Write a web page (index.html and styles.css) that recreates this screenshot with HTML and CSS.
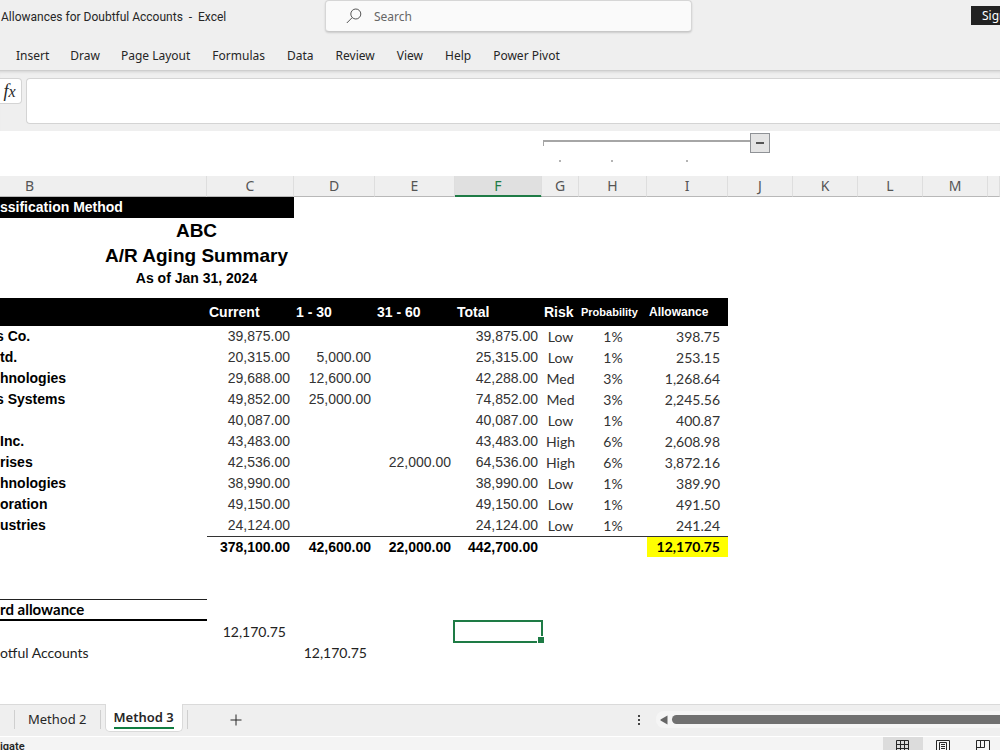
FILE: index.html
```html
<!DOCTYPE html>
<html lang="en">
<head>
<meta charset="UTF-8">
<meta name="viewport" content="width=device-width, initial-scale=1.0">
<title>Allowances for Doubtful Accounts - Excel</title>
<link rel="stylesheet" href="styles.css">
</head>
<body>
<header class="title-bar">
    <div class="doc-title">Allowances for Doubtful Accounts&nbsp; -&nbsp; Excel</div>
    <label class="search">
        <svg class="search-icon" viewBox="0 0 16 16" aria-hidden="true">
            <circle cx="9.8" cy="6" r="5"/>
            <path d="M6.2 9.6L0.8 15"/>
        </svg>
        <input type="search" placeholder="Search" aria-label="Search">
    </label>
    <button class="sign-in">Sign in</button>
</header>

<nav class="ribbon">
    <button>Insert</button>
    <button>Draw</button>
    <button>Page Layout</button>
    <button>Formulas</button>
    <button>Data</button>
    <button>Review</button>
    <button>View</button>
    <button>Help</button>
    <button>Power Pivot</button>
</nav>

<div class="formula-bar">
    <button class="fx" aria-label="Insert function"><i>f<span>x</span></i></button>
    <input class="formula" type="text" aria-label="Formula bar">
</div>

<div class="outline">
    <div class="group">
        <span class="bracket"></span>
        <button class="collapse" aria-label="Collapse group"></button>
    </div>
    <span class="dot dot-g"></span>
    <span class="dot"></span>
    <span class="dot"></span>
</div>

<main class="sheet">
    <table>
        <colgroup>
            <col class="w-b"><col class="w-c"><col class="w-d"><col class="w-e"><col class="w-f"><col class="w-g"><col class="w-h"><col class="w-i">
            <col class="w-std"><col class="w-std"><col class="w-std"><col class="w-std"><col>
        </colgroup>
        <thead>
            <tr class="letters">
                <th class="letter-b">B</th><th>C</th><th>D</th><th>E</th><th class="active">F</th><th>G</th><th>H</th><th>I</th><th>J</th><th>K</th><th>L</th><th>M</th><th></th>
            </tr>
        </thead>
        <tbody>
            <tr><td class="band" colspan="2">ssification Method</td></tr>
            <tr class="tall"><td class="heading" colspan="2">ABC</td></tr>
            <tr class="tall"><td class="heading" colspan="2">A/R Aging Summary</td></tr>
            <tr><td class="heading small" colspan="2">As of Jan 31, 2024</td></tr>
            <tr class="spacer"><td></td></tr>
            <tr class="fields">
                <th></th><th>Current</th><th>1 - 30</th><th>31 - 60</th><th>Total</th><th>Risk</th><th class="fine">Probability</th><th class="mid">Allowance</th>
            </tr>
            <tr><td class="name cut">s Co.</td><td>39,875.00</td><td></td><td></td><td>39,875.00</td><td class="risk">Low</td><td class="risk">1%</td><td class="amount">398.75</td></tr>
            <tr><td class="name">td.</td><td>20,315.00</td><td>5,000.00</td><td></td><td>25,315.00</td><td class="risk">Low</td><td class="risk">1%</td><td class="amount">253.15</td></tr>
            <tr><td class="name">hnologies</td><td>29,688.00</td><td>12,600.00</td><td></td><td>42,288.00</td><td class="risk">Med</td><td class="risk">3%</td><td class="amount">1,268.64</td></tr>
            <tr><td class="name cut">s Systems</td><td>49,852.00</td><td>25,000.00</td><td></td><td>74,852.00</td><td class="risk">Med</td><td class="risk">3%</td><td class="amount">2,245.56</td></tr>
            <tr><td></td><td>40,087.00</td><td></td><td></td><td>40,087.00</td><td class="risk">Low</td><td class="risk">1%</td><td class="amount">400.87</td></tr>
            <tr><td class="name">Inc.</td><td>43,483.00</td><td></td><td></td><td>43,483.00</td><td class="risk">High</td><td class="risk">6%</td><td class="amount">2,608.98</td></tr>
            <tr><td class="name">rises</td><td>42,536.00</td><td></td><td>22,000.00</td><td>64,536.00</td><td class="risk">High</td><td class="risk">6%</td><td class="amount">3,872.16</td></tr>
            <tr><td class="name">hnologies</td><td>38,990.00</td><td></td><td></td><td>38,990.00</td><td class="risk">Low</td><td class="risk">1%</td><td class="amount">389.90</td></tr>
            <tr><td class="name">oration</td><td>49,150.00</td><td></td><td></td><td>49,150.00</td><td class="risk">Low</td><td class="risk">1%</td><td class="amount">491.50</td></tr>
            <tr><td class="name">ustries</td><td>24,124.00</td><td></td><td></td><td>24,124.00</td><td class="risk">Low</td><td class="risk">1%</td><td class="amount">241.24</td></tr>
            <tr class="totals"><td></td><td>378,100.00</td><td>42,600.00</td><td>22,000.00</td><td>442,700.00</td><td></td><td></td><td class="amount highlight">12,170.75</td></tr>
            <tr><td></td></tr>
            <tr><td></td></tr>
            <tr><td class="entry-title">rd allowance</td></tr>
            <tr><td></td><td class="entry">12,170.75</td><td></td><td></td><td class="selected"><span class="cursor"></span></td></tr>
            <tr><td class="entry-name">otful Accounts</td><td></td><td class="entry">12,170.75</td></tr>
        </tbody>
    </table>
</main>

<div class="tab-bar">
    <div class="tabs">
        <button class="tab">Method 2</button>
        <button class="tab current"><span>Method 3</span></button>
        <button class="add" aria-label="New sheet">
            <svg viewBox="0 0 12 12" aria-hidden="true"><path d="M6 0.5V11.5M0.5 6H11.5"/></svg>
        </button>
    </div>
    <div class="scroll-area">
        <svg class="grip" viewBox="0 0 4 12" aria-hidden="true">
            <path d="M1 1h2v2h-2zM1 5h2v2h-2zM1 9h2v2h-2z"/>
        </svg>
        <div class="scrollbar">
            <svg class="arrow" viewBox="0 0 8 10" aria-hidden="true"><path d="M7.5 0.5V9.5L0.5 5.5V4.5Z"/></svg>
            <div class="thumb"></div>
        </div>
    </div>
</div>

<footer class="status-bar">
    <span class="status-text">igate</span>
    <div class="views">
        <button class="on" aria-label="Normal view">
            <svg viewBox="0 0 14 14"><path d="M.5 .5h12v12H.5zM4.5 .5v12M8.5 .5v12M.5 4.5h12M.5 8.5h12"/></svg>
        </button>
        <button aria-label="Page layout view">
            <svg viewBox="0 0 14 14"><path d="M.5 .5h13v13H.5zM3.5 2.5h7v9h-7zM5 4.5h4M5 6.5h4M5 8.5h4"/></svg>
        </button>
        <button aria-label="Page break preview">
            <svg viewBox="0 0 14 14"><path d="M.5 .5h13v13H.5zM.5 7.5h8M4.5 .5v7M8.5 .5v7"/></svg>
        </button>
    </div>
</footer>
</body>
</html>
```

FILE: styles.css
```css
* { margin: 0; padding: 0; box-sizing: border-box; }
body {
    height: 100vh;
    display: flex;
    flex-direction: column;
    overflow: hidden;
    background: #fff;
    color: #262626;
    font-family: "Noto Sans", "Open Sans", sans-serif;
    font-size: 12px;
}
button, input {
    font: inherit;
    color: inherit;
    border: none;
    background: none;
    outline: none;
}
button { white-space: nowrap; }
svg { display: block; fill: none; stroke: #262626; }

/* title bar */
.title-bar {
    display: flex;
    align-items: flex-start;
    flex: none;
    height: 40px;
    background: #efefef;
    overflow: hidden;
}
.doc-title {
    width: 325px;
    padding: 8px 0 0 1px;
    font-family: Roboto, "Noto Sans", sans-serif;
    line-height: 18px;
    white-space: nowrap;
}
.search {
    display: flex;
    align-items: center;
    width: 367px;
    height: 32px;
    padding-left: 20px;
    gap: 12px;
    background: #fafafa;
    border: 1px solid #d6d6d6;
    border-bottom-color: #c8c8c8;
    border-radius: 4px;
    box-shadow: 0 1px 2px rgba(0, 0, 0, 0.15);
}
.search-icon { width: 16px; height: 16px; stroke: #555; }
.search input { flex: 1; color: #666; }
.search input::placeholder { color: #666; opacity: 1; }
.sign-in {
    width: 60px;
    height: 19px;
    margin: 6px -31px 0 auto;
    padding-left: 11px;
    text-align: left;
    background: #222;
    color: #fff;
    line-height: 19px;
}

/* ribbon */
.ribbon {
    display: flex;
    flex: none;
    gap: 21px;
    height: 31px;
    padding-left: 16px;
    background: #efefef;
    border-bottom: 1px solid #cecece;
}
.ribbon button:nth-child(n+3) { margin-right: 1px; }

/* formula bar */
.formula-bar {
    display: flex;
    flex: none;
    gap: 4px;
    height: 60px;
    padding-top: 7px;
    background: #efefef;
    box-shadow: inset 0 3px 3px -2px rgba(0, 0, 0, 0.12);
}
.fx {
    width: 22px;
    height: 26px;
    padding-right: 2px;
    background: #fff;
    border: 1px solid #d4d4d4;
    border-left: none;
    border-radius: 0 4px 4px 0;
    font-family: "Liberation Serif", serif;
    font-size: 18px;
    line-height: 22px;
}
.fx span { font-size: 16px; }
.formula {
    flex: 1;
    height: 46px;
    background: #fff;
    border: 1px solid #d4d4d4;
    border-right: none;
    border-radius: 4px 0 0 4px;
}

/* column group outline */
.outline {
    display: grid;
    flex: none;
    grid-template-columns: 206px 87px 81px 80px 87px 37px 68px 82px 65px;
    grid-template-rows: 27px 4px;
    height: 45px;
    padding-top: 2px;
}
.group {
    grid-column: 6 / 10;
    display: flex;
    padding: 0 23px 0 2px;
}
.bracket {
    flex: 1;
    height: 6px;
    margin-top: 7px;
    border-top: 2px solid #a6a6a6;
    border-left: 1px solid #a6a6a6;
}
.collapse {
    display: flex;
    align-items: center;
    justify-content: center;
    width: 20px;
    height: 20px;
    background: #e4e4e4;
    border: 1px solid #8f9296;
}
.collapse::before {
    content: "";
    width: 8px;
    height: 2px;
    background: #555;
}
.dot {
    width: 2px;
    height: 2px;
    background: #b4b4b4;
    justify-self: center;
}
.dot-g { grid-column: 6; }

/* worksheet */
.sheet { flex: 1; min-height: 0; overflow: hidden; }
table {
    width: 100%;
    table-layout: fixed;
    border-collapse: separate;
    border-spacing: 0;
    font-family: "Liberation Sans", Arial, sans-serif;
    font-size: 14px;
}
.w-b { width: 207px; }
.w-c, .w-f { width: 87px; }
.w-d { width: 81px; }
.w-e { width: 80px; }
.w-g { width: 37px; }
.w-h { width: 68px; }
.w-i { width: 81px; }
.w-std { width: 65px; }
tr { height: 21px; }
td {
    height: 21px;
    padding-right: 4px;
    line-height: 21px;
    text-align: right;
    white-space: nowrap;
    color: #333;
}
.letters th {
    height: 21px;
    background: #efefef;
    border-right: 1px solid #dedede;
    border-bottom: 1px solid #b8b8b8;
    color: #555;
    font-family: "Noto Sans", "Open Sans", sans-serif;
    font-size: 14px;
    font-weight: normal;
    line-height: 20px;
}
.letters .letter-b { padding-left: 25px; text-align: left; }
.letters .active {
    background: #e0e0e0;
    border-bottom-color: #1e7b45;
    box-shadow: inset 0 -1px #1e7b45;
    color: #1e7b45;
}
.band {
    background: #000;
    color: #fff;
    font-weight: bold;
    text-align: left;
}
.tall, .tall td { height: 25px; }
.heading {
    padding: 0 0 0 99px;
    color: #000;
    font-size: 19px;
    font-weight: bold;
    line-height: 25px;
    text-align: center;
}
.small { font-size: 14px; line-height: 21px; }
.spacer, .spacer td { height: 9px; line-height: 9px; }
.fields th {
    height: 28px;
    padding-left: 2px;
    background: #000;
    color: #fff;
    text-align: left;
    white-space: nowrap;
}
.fields .fine { font-size: 11px; }
.fields .mid { font-size: 12px; }
.name {
    color: #000;
    font-weight: bold;
    text-align: left;
}
.cut { text-indent: -4px; }
.risk, .amount, .entry, .entry-name, .entry-title {
    font-family: Lato, Carlito, Calibri, sans-serif;
}
.risk { padding: 0; text-align: center; }
.amount { padding: 0 8px 0 0; }
.totals td {
    border-top: 1px solid #333;
    color: #000;
    font-weight: bold;
    line-height: 20px;
}
.totals td:first-child { border-top: none; }
.totals .highlight { background: #ff0; }
.entry { padding-right: 8px; color: #222; }
.entry-name { color: #222; text-align: left; }
.entry-title {
    height: 22px;
    border-top: 1px solid #222;
    border-bottom: 2px solid #000;
    color: #000;
    font-size: 15px;
    font-weight: bold;
    line-height: 19px;
    text-align: left;
}
.selected { position: relative; }
.cursor {
    position: absolute;
    inset: -1px -1px -1px -2px;
    border: 2px solid #1e7b45;
}
.cursor::after {
    content: "";
    position: absolute;
    right: -4px;
    bottom: -3px;
    width: 6px;
    height: 6px;
    background: #1e7b45;
    border: 1px solid #fff;
}

/* sheet tabs */
.tab-bar {
    display: flex;
    flex: none;
    height: 32px;
    background: #efefef;
    border-top: 1px solid #dadada;
}
.tabs { display: flex; flex: 1; padding-left: 14px; }
.tab {
    height: 19px;
    margin-top: 5px;
    padding: 0 13px;
    border-left: 1px solid #cfcfcf;
    border-right: 1px solid #cfcfcf;
    font-size: 13px;
    line-height: 19px;
}
.current {
    height: 28px;
    margin: -1px 4px 0;
    padding: 0 8px;
    background: #fff;
    border: 1px solid #dadada;
    border-top: none;
    border-radius: 0 0 5px 5px;
    font-weight: 600;
}
.current span {
    display: block;
    border-bottom: 2px solid #107c41;
    line-height: 20px;
}
.add {
    height: 19px;
    margin-top: 5px;
    padding-left: 42px;
    border-left: 1px solid #cfcfcf;
}
.add svg { width: 12px; height: 12px; }
.scroll-area {
    display: flex;
    align-items: center;
    width: 363px;
    height: 29px;
    gap: 15px;
}
.grip { width: 4px; height: 12px; fill: #444; stroke: none; }
.scrollbar {
    display: flex;
    align-items: center;
    flex: 1;
    height: 17px;
    gap: 4px;
    padding-left: 4px;
    background: #f5f5f5;
    border-radius: 8px 0 0 8px;
}
.arrow { width: 8px; height: 10px; fill: #666; stroke: none; }
.thumb {
    flex: 1;
    height: 9px;
    background: #707070;
    border-radius: 5px 0 0 5px;
}

/* status bar */
.status-bar {
    display: flex;
    flex: none;
    justify-content: space-between;
    height: 14px;
    background: #f4f4f4;
    border-top: 1px solid #fff;
    overflow: hidden;
}
.status-text {
    font-family: Roboto, "Noto Sans", sans-serif;
    font-size: 11px;
    font-weight: 600;
    line-height: 20px;
}
.views { display: flex; width: 117px; }
.views button {
    display: flex;
    justify-content: center;
    align-items: flex-start;
    flex: none;
    width: 40px;
    height: 22px;
    padding-top: 3px;
}
.views .on { background: #dcdcdc; }
.views svg { width: 14px; height: 14px; }
```
